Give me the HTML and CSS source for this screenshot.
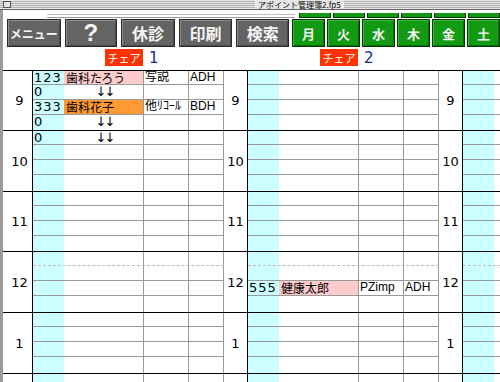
FILE: index.html
```html
<!doctype html>
<html>
<head>
<meta charset="UTF-8">
<title>アポイント管理簿2.fp5</title>
<link rel="stylesheet" href="styles.css">
</head>
<body>
<div class="titlebar"><span class="close"></span><span class="title">アポイント管理簿2.fp5</span></div>
<div class="frame">
  <div class="toolbar">
    <div class="ghost">
      <span class="field"></span>
      <span class="gbar"></span><span class="gbar"></span><span class="gbar"></span>
      <span class="gbar"></span><span class="gbar"></span><span class="gbar"></span>
    </div>
    <div class="buttons">
      <div class="btn menu">メニュー</div>
      <div class="btn help narrow">?</div>
      <div class="btn">休診</div>
      <div class="btn">印刷</div>
      <div class="btn narrow">検索</div>
      <div class="days">
        <div class="btn day">月</div>
        <div class="btn day">火</div>
        <div class="btn day">水</div>
        <div class="btn day">木</div>
        <div class="btn day">金</div>
        <div class="btn day">土</div>
      </div>
    </div>
  </div>

  <div class="chairs">
    <div class="lead"></div>
    <div class="seat"><span class="tag">チェア</span><span class="num">1</span></div>
    <div class="gap"></div>
    <div class="seat"><span class="tag">チェア</span><span class="num">2</span></div>
  </div>

  <div class="grid">
    <!-- 9時 -->
    <div class="hour">
      <div class="hr first">9</div>
      <div class="chair">
        <div class="slot"><span class="no">123</span><span class="nm pink">歯科たろう</span><span class="c3">写説</span><span class="c4">ADH</span></div>
        <div class="slot"><span class="no">0</span><span class="nm arrows">↓↓</span><span class="c3"></span><span class="c4"></span></div>
        <div class="slot"><span class="no">333</span><span class="nm orange">歯科花子</span><span class="c3">他ﾘｺｰﾙ</span><span class="c4">BDH</span></div>
        <div class="slot"><span class="no">0</span><span class="nm arrows">↓↓</span><span class="c3"></span><span class="c4"></span></div>
      </div>
      <div class="hr">9</div>
      <div class="chair">
        <div class="slot"><span class="no"></span><span class="nm"></span><span class="c3"></span><span class="c4"></span></div>
        <div class="slot"><span class="no"></span><span class="nm"></span><span class="c3"></span><span class="c4"></span></div>
        <div class="slot"><span class="no"></span><span class="nm"></span><span class="c3"></span><span class="c4"></span></div>
        <div class="slot"><span class="no"></span><span class="nm"></span><span class="c3"></span><span class="c4"></span></div>
      </div>
      <div class="hr">9</div>
      <div class="chair">
        <div class="slot"><span class="no"></span><span class="nm"></span><span class="c3"></span><span class="c4"></span></div>
        <div class="slot"><span class="no"></span><span class="nm"></span><span class="c3"></span><span class="c4"></span></div>
        <div class="slot"><span class="no"></span><span class="nm"></span><span class="c3"></span><span class="c4"></span></div>
        <div class="slot"><span class="no"></span><span class="nm"></span><span class="c3"></span><span class="c4"></span></div>
      </div>
    </div>

    <!-- 10時 -->
    <div class="hour tall">
      <div class="hr first">10</div>
      <div class="chair">
        <div class="slot"><span class="no">0</span><span class="nm arrows">↓↓</span><span class="c3"></span><span class="c4"></span></div>
        <div class="slot"><span class="no"></span><span class="nm"></span><span class="c3"></span><span class="c4"></span></div>
        <div class="slot"><span class="no"></span><span class="nm"></span><span class="c3"></span><span class="c4"></span></div>
        <div class="slot"><span class="no"></span><span class="nm"></span><span class="c3"></span><span class="c4"></span></div>
      </div>
      <div class="hr">10</div>
      <div class="chair">
        <div class="slot"><span class="no"></span><span class="nm"></span><span class="c3"></span><span class="c4"></span></div>
        <div class="slot"><span class="no"></span><span class="nm"></span><span class="c3"></span><span class="c4"></span></div>
        <div class="slot"><span class="no"></span><span class="nm"></span><span class="c3"></span><span class="c4"></span></div>
        <div class="slot"><span class="no"></span><span class="nm"></span><span class="c3"></span><span class="c4"></span></div>
      </div>
      <div class="hr">10</div>
      <div class="chair">
        <div class="slot"><span class="no"></span><span class="nm"></span><span class="c3"></span><span class="c4"></span></div>
        <div class="slot"><span class="no"></span><span class="nm"></span><span class="c3"></span><span class="c4"></span></div>
        <div class="slot"><span class="no"></span><span class="nm"></span><span class="c3"></span><span class="c4"></span></div>
        <div class="slot"><span class="no"></span><span class="nm"></span><span class="c3"></span><span class="c4"></span></div>
      </div>
    </div>

    <!-- 11時 -->
    <div class="hour">
      <div class="hr first">11</div>
      <div class="chair">
        <div class="slot"><span class="no"></span><span class="nm"></span><span class="c3"></span><span class="c4"></span></div>
        <div class="slot"><span class="no"></span><span class="nm"></span><span class="c3"></span><span class="c4"></span></div>
        <div class="slot"><span class="no"></span><span class="nm"></span><span class="c3"></span><span class="c4"></span></div>
        <div class="slot"><span class="no"></span><span class="nm"></span><span class="c3"></span><span class="c4"></span></div>
      </div>
      <div class="hr">11</div>
      <div class="chair">
        <div class="slot"><span class="no"></span><span class="nm"></span><span class="c3"></span><span class="c4"></span></div>
        <div class="slot"><span class="no"></span><span class="nm"></span><span class="c3"></span><span class="c4"></span></div>
        <div class="slot"><span class="no"></span><span class="nm"></span><span class="c3"></span><span class="c4"></span></div>
        <div class="slot"><span class="no"></span><span class="nm"></span><span class="c3"></span><span class="c4"></span></div>
      </div>
      <div class="hr">11</div>
      <div class="chair">
        <div class="slot"><span class="no"></span><span class="nm"></span><span class="c3"></span><span class="c4"></span></div>
        <div class="slot"><span class="no"></span><span class="nm"></span><span class="c3"></span><span class="c4"></span></div>
        <div class="slot"><span class="no"></span><span class="nm"></span><span class="c3"></span><span class="c4"></span></div>
        <div class="slot"><span class="no"></span><span class="nm"></span><span class="c3"></span><span class="c4"></span></div>
      </div>
    </div>

    <!-- 12時 -->
    <div class="hour tall">
      <div class="hr first">12</div>
      <div class="chair">
        <div class="slot dash"><span class="no"></span><span class="nm"></span><span class="c3"></span><span class="c4"></span></div>
        <div class="slot"><span class="no"></span><span class="nm"></span><span class="c3"></span><span class="c4"></span></div>
        <div class="slot"><span class="no"></span><span class="nm"></span><span class="c3"></span><span class="c4"></span></div>
        <div class="slot"><span class="no"></span><span class="nm"></span><span class="c3"></span><span class="c4"></span></div>
      </div>
      <div class="hr">12</div>
      <div class="chair">
        <div class="slot dash"><span class="no"></span><span class="nm"></span><span class="c3"></span><span class="c4"></span></div>
        <div class="slot"><span class="no"></span><span class="nm"></span><span class="c3"></span><span class="c4"></span></div>
        <div class="slot"><span class="no">555</span><span class="nm pink">健康太郎</span><span class="c3">PZimp</span><span class="c4">ADH</span></div>
        <div class="slot"><span class="no"></span><span class="nm"></span><span class="c3"></span><span class="c4"></span></div>
      </div>
      <div class="hr">12</div>
      <div class="chair">
        <div class="slot dash"><span class="no"></span><span class="nm"></span><span class="c3"></span><span class="c4"></span></div>
        <div class="slot"><span class="no"></span><span class="nm"></span><span class="c3"></span><span class="c4"></span></div>
        <div class="slot"><span class="no"></span><span class="nm"></span><span class="c3"></span><span class="c4"></span></div>
        <div class="slot"><span class="no"></span><span class="nm"></span><span class="c3"></span><span class="c4"></span></div>
      </div>
    </div>

    <!-- 1時 -->
    <div class="hour tall">
      <div class="hr first">1</div>
      <div class="chair">
        <div class="slot"><span class="no"></span><span class="nm"></span><span class="c3"></span><span class="c4"></span></div>
        <div class="slot"><span class="no"></span><span class="nm"></span><span class="c3"></span><span class="c4"></span></div>
        <div class="slot"><span class="no"></span><span class="nm"></span><span class="c3"></span><span class="c4"></span></div>
        <div class="slot"><span class="no"></span><span class="nm"></span><span class="c3"></span><span class="c4"></span></div>
      </div>
      <div class="hr">1</div>
      <div class="chair">
        <div class="slot"><span class="no"></span><span class="nm"></span><span class="c3"></span><span class="c4"></span></div>
        <div class="slot"><span class="no"></span><span class="nm"></span><span class="c3"></span><span class="c4"></span></div>
        <div class="slot"><span class="no"></span><span class="nm"></span><span class="c3"></span><span class="c4"></span></div>
        <div class="slot"><span class="no"></span><span class="nm"></span><span class="c3"></span><span class="c4"></span></div>
      </div>
      <div class="hr">1</div>
      <div class="chair">
        <div class="slot"><span class="no"></span><span class="nm"></span><span class="c3"></span><span class="c4"></span></div>
        <div class="slot"><span class="no"></span><span class="nm"></span><span class="c3"></span><span class="c4"></span></div>
        <div class="slot"><span class="no"></span><span class="nm"></span><span class="c3"></span><span class="c4"></span></div>
        <div class="slot"><span class="no"></span><span class="nm"></span><span class="c3"></span><span class="c4"></span></div>
      </div>
    </div>

    <!-- 2時 (cut off) -->
    <div class="hour">
      <div class="hr first"></div>
      <div class="chair">
        <div class="slot"><span class="no"></span><span class="nm"></span><span class="c3"></span><span class="c4"></span></div>
      </div>
      <div class="hr"></div>
      <div class="chair">
        <div class="slot"><span class="no"></span><span class="nm"></span><span class="c3"></span><span class="c4"></span></div>
      </div>
      <div class="hr"></div>
      <div class="chair">
        <div class="slot"><span class="no"></span><span class="nm"></span><span class="c3"></span><span class="c4"></span></div>
      </div>
    </div>
  </div>
</div>
</body>
</html>
```

FILE: styles.css
```css
body {
	margin: 0;
	width: 500px;
	height: 382px;
	overflow: hidden;
	background: #fff;
	color: #000;
	font-family: "Liberation Sans", "Noto Sans CJK JP", sans-serif;
}

/* window title */
.titlebar {
	width: 700px;
	height: 9px;
	border-bottom: 1px solid #666;
	background: repeating-linear-gradient(to bottom, #e6e6e6 0, #e6e6e6 1px, #b2b2b2 1px, #b2b2b2 2px);
	display: flex;
	align-items: center;
}
.titlebar .close {
	width: 6px;
	height: 5px;
	margin-left: 3px;
	border: 1px solid #555;
	background: #e6e6e6;
}
.titlebar .title {
	margin-left: 244px;
	padding: 0 3px;
	background: #e6e6e6;
	font-size: 8px;
	line-height: 9px;
	font-family: "Noto Sans CJK JP", sans-serif;
}

.frame {
	border-left: 3px solid #9a9a9a;
}

/* buttons */
.toolbar {
	padding-top: 3px;
}
.ghost {
	display: flex;
	height: 5px;
	margin-bottom: 1px;
}
.ghost .field {
	margin-left: 44px;
	width: 258px;
	height: 4px;
	margin-top: 1px;
	box-sizing: border-box;
	border-top: 1px solid #bbb;
	border-bottom: 1px solid #999;
}
.ghost .gbar {
	width: 33px;
	margin-left: 2px;
	box-sizing: border-box;
	background: #129a12;
	border: 1px solid #063806;
	border-top: 0;
}
.ghost .field + .gbar {
	margin-left: 4px;
}
.buttons {
	display: flex;
	gap: 4px;
	margin-left: 4px;
	height: 28px;
}
.btn {
	width: 57px;
	box-sizing: border-box;
	background: #646464;
	border: 1px solid #2a2a2a;
	box-shadow: inset 1px 1px 0 #8c8c8c, inset -1px -1px 0 #4a4a4a;
	color: #f4f4f4;
	font: bold 16px "Noto Sans CJK JP", sans-serif;
	display: flex;
	align-items: center;
	justify-content: center;
}
.btn.narrow {
	width: 56px;
}
.btn.menu {
	font-size: 12px;
}
.btn.help {
	font: bold 24px "Liberation Sans", sans-serif;
}
.days {
	display: flex;
	gap: 2px;
	margin-left: -1px;
}
.btn.day {
	width: 33px;
	background: #129a12;
	border-color: #063806;
	box-shadow: inset 1px 1px 0 #3cb83c, inset -1px -1px 0 #0a700a;
	font-size: 13px;
}

/* chair labels */
.chairs {
	display: flex;
	height: 23px;
}
.chairs .lead {
	width: 30px;
}
.chairs .gap {
	width: 24px;
}
.chairs .seat {
	width: 191px;
	box-sizing: border-box;
	padding: 2px 0 0 72px;
	display: flex;
	align-items: flex-start;
}
.tag {
	width: 38px;
	height: 17px;
	background: #ff3300;
	color: #fff;
	font: 11px "Noto Sans CJK JP", sans-serif;
	display: flex;
	align-items: center;
	justify-content: center;
}
.num {
	margin-left: 6px;
	color: #1a2a8c;
	font: 15px "DejaVu Sans", sans-serif;
	line-height: 18px;
}

/* schedule grid */
.grid {
	width: 700px;
}
.hour {
	display: flex;
	height: 59px;
	border-top: 1px solid #000;
}
.hour.tall {
	height: 60px;
}
.hr {
	width: 23px;
	flex: none;
	border-right: 1px solid #000;
	display: flex;
	align-items: center;
	justify-content: center;
	font: 13px "DejaVu Sans", sans-serif;
}
.hr.first {
	width: 25px;
	padding-left: 4px;
}
.chair {
	width: 191px;
	flex: none;
	display: flex;
	flex-direction: column;
}
.slot {
	display: grid;
	grid-template-columns: 31px 79px 45px 36px;
	height: 15px;
	box-sizing: border-box;
	border-bottom: 1px solid #999;
}
.slot:first-child {
	height: 14px;
}
.slot:last-child {
	flex: 1;
	border-bottom: 0;
}
.slot.dash {
	border-bottom: 1px dashed #b8b8b8;
}
.slot > span {
	white-space: nowrap;
	font-size: 12px;
	line-height: 13px;
}
.slot .no {
	background: #ccffff;
	padding-left: 1px;
	font: 13px "DejaVu Sans", sans-serif;
	letter-spacing: 1px;
	line-height: 13px;
}
.slot .nm {
	padding-left: 2px;
	font-family: "Noto Sans CJK JP", sans-serif;
}
.slot .c3 {
	border-left: 1px solid #999;
	padding-left: 1px;
	font-family: "Liberation Sans", "Noto Sans CJK JP", sans-serif;
}
.slot .c4 {
	border-left: 1px solid #999;
	border-right: 1px solid #999;
	padding-left: 1px;
}
.slot .arrows {
	text-align: center;
	font: 13px "DejaVu Sans", sans-serif;
	line-height: 13px;
	letter-spacing: -2px;
	overflow: hidden;
	color: #000;
}
.pink {
	background: #ffcccc;
}
.orange {
	background: #ff9933;
}
```
